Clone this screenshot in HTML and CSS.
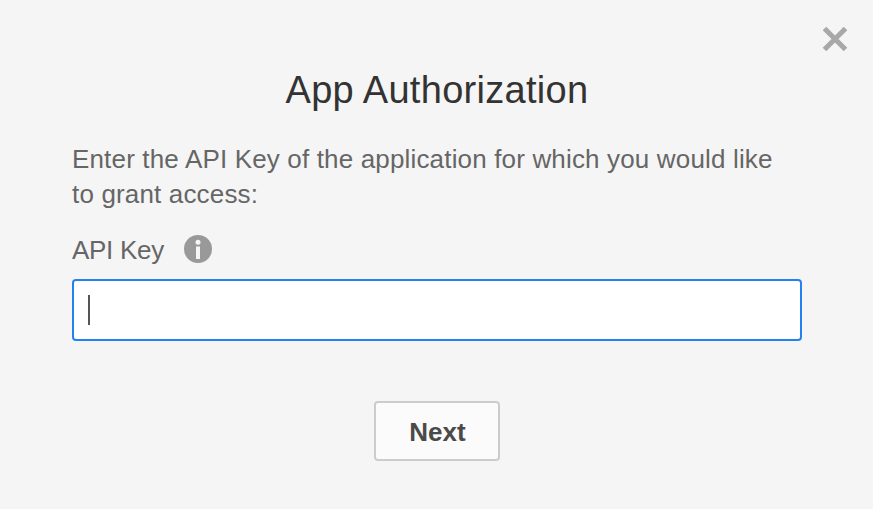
FILE: index.html
```html
<!DOCTYPE html>
<html lang="en">
<head>
<meta charset="utf-8">
<title>App Authorization</title>
<link rel="stylesheet" href="styles.css">
</head>
<body>
<main class="dialog">
  <button class="close" type="button" aria-label="Close">
    <svg viewBox="0 0 28 28" width="28" height="28"><path d="M3.5 3.5 L24.5 24.5 M24.5 3.5 L3.5 24.5" stroke="#a8a8a8" stroke-width="5" fill="none"/></svg>
  </button>
  <h1 class="title">App Authorization</h1>
  <p class="intro">Enter the API Key of the application for which you would like to grant access:</p>
  <div class="label-row">
    <label class="label" for="key">API Key</label>
    <svg class="info" viewBox="0 0 28 28" width="28" height="28"><circle cx="14" cy="14" r="14" fill="#999"/><circle cx="14" cy="7.3" r="2.5" fill="#f5f5f5"/><rect x="12" y="11.5" width="4" height="12.5" fill="#f5f5f5"/></svg>
  </div>
  <div class="input" id="key"><span class="caret"></span></div>
  <div class="actions"><button class="next" type="button">Next</button></div>
</main>
</body>
</html>
```
FILE: styles.css
```css
html, body { margin: 0; height: 100%; }
body {
  background: #f5f5f5;
  font-family: "Liberation Sans", Arial, sans-serif;
  color: #666;
  overflow: hidden;
}
.dialog { position: relative; padding: 68px 71px 0 72px; }
.close {
  position: absolute; top: 25px; right: 24px;
  padding: 0; border: 0; background: none; width: 28px; height: 28px;
}
.close svg { display: block; filter: blur(0.6px); }
.title {
  margin: 0 0 30px; text-align: center;
  font-size: 38px; line-height: 44px; font-weight: 400; color: #333;
  letter-spacing: 0.3px;
}
.intro {
  margin: 0 0 23px; max-width: 715px;
  font-size: 26px; line-height: 35px; letter-spacing: 0.16px;
}
.label-row { display: flex; align-items: center; gap: 20px; height: 30px; margin-bottom: 14px; }
.label { font-size: 26px; line-height: 30px; letter-spacing: -0.3px; }
.info { display: block; margin-top: -2px; }
.input {
  box-sizing: border-box; height: 62px;
  background: #fff; border: 2px solid #2481f2; border-radius: 4px;
  padding: 14px 14px;
}
.caret { display: block; width: 2px; height: 30px; background: #555; }
.actions { display: flex; justify-content: center; margin-top: 60px; padding-right: 1px; }
.next {
  box-sizing: border-box; width: 126px; height: 60px;
  background: #fbfbfb; border: 2px solid #ccc; border-radius: 4px;
  font-family: inherit; font-size: 26px; font-weight: 700; color: #4a4a4a; padding: 2px 0 0 2px;
}
```
